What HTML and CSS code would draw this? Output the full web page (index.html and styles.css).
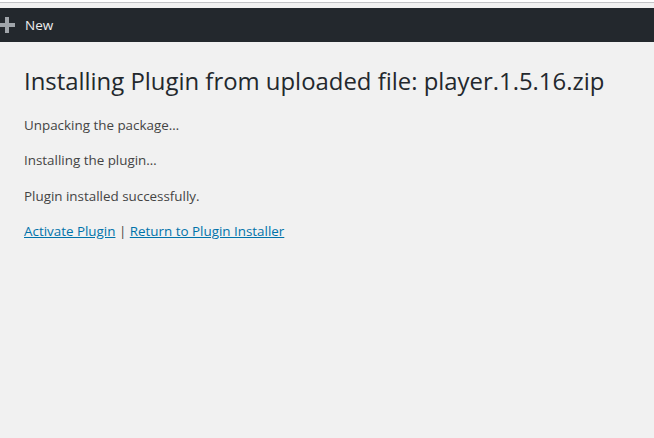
FILE: index.html
```html
<!DOCTYPE html>
<html>
<head>
<meta charset="utf-8">
<link rel="stylesheet" href="styles.css">
</head>
<body>
<div class="topline"></div>
<div class="adminbar">
  <span class="plus"><svg width="16" height="16" viewBox="0 0 16 16"><path d="M6 0h4v6h6v4h-6v6H6v-6H0V6h6z" fill="#a0a5aa"/></svg></span>
  <span class="new">New</span>
</div>
<div class="wrap">
  <h1 class="title">Installing Plugin from uploaded file: player.1.5.16.zip</h1>
  <p class="msg">Unpacking the package…</p>
  <p class="msg">Installing the plugin…</p>
  <p class="msg">Plugin installed successfully.</p>
  <p class="msg"><a href="#" class="lnk">Activate Plugin</a> | <a href="#" class="lnk">Return to Plugin Installer</a></p>
</div>
</body>
</html>
```
FILE: styles.css
```css
html, body { margin: 0; padding: 0; }
body {
  background: #f1f1f1;
  font-family: "Open Sans", "Liberation Sans", sans-serif;
  color: #444;
  height: 438px;
  overflow: hidden;
}
.topline {
  height: 8px;
  background: #f1f1f1;
  border-top: 2px solid #fff;
  box-sizing: border-box;
  box-shadow: inset 0 1px 0 #c3c4c7;
}
.adminbar {
  height: 34px;
  background: #23282d;
  display: flex;
  align-items: center;
}
.plus { display: flex; margin-left: -1px; }
.new {
  color: #eee;
  font-size: 13.5px;
  margin-left: 10px;
}
.wrap { padding: 24px 0 0 24px; }
.title {
  font-weight: 400;
  font-size: 23.9px;
  color: #23282d;
  margin: 0 0 20px;
  line-height: 1.25;
}
.msg {
  font-size: 13.4px;
  margin: 0 0 16px;
  line-height: 19.5px;
}
.lnk { color: #0073aa; }
```
